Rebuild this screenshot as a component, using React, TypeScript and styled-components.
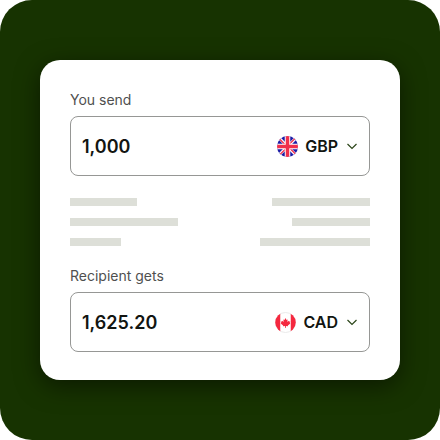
import React, { useId, useState } from "react";
import styled, { createGlobalStyle } from "styled-components";

const GlobalStyle = createGlobalStyle`
  *, *::before, *::after { box-sizing: border-box; }
  body {
    margin: 0;
    background: #ffffff;
    font-family: Inter, "Liberation Sans", sans-serif;
    color: #121511;
  }
`;

const Stage = styled.main`
  display: flex;
  align-items: center;
  justify-content: center;
  min-height: 100vh;
  padding: 40px;
  border-radius: 32px;
  background: #173301;
`;

const Card = styled.form`
  flex: 1;
  min-width: 0;
  max-width: 480px;
  padding: 30px 30px 28px;
  border-radius: 20px;
  background: #ffffff;
  box-shadow: 0 6px 24px rgba(0, 0, 0, 0.5);
`;

const FieldGroup = styled.div`
  display: flex;
  flex-direction: column;
  gap: 6px;
`;

const Label = styled.label`
  font-size: 14px;
  line-height: 20px;
  color: #4f504f;
`;

const FieldBox = styled.div`
  display: flex;
  align-items: center;
  height: 60px;
  padding: 0 11px;
  border: 1px solid #969795;
  border-radius: 8px;
`;

const AmountInput = styled.input`
  flex: 1;
  width: 100%;
  min-width: 0;
  padding: 2px 0 0;
  border: 0;
  outline: 0;
  background: transparent;
  font: 600 18px/24px Inter, "Liberation Sans", sans-serif;
  color: #121511;
`;

const CurrencyButton = styled.button`
  display: flex;
  align-items: center;
  gap: 8px;
  padding: 0;
  border: 0;
  background: transparent;
  font: 600 16px/24px Inter, "Liberation Sans", sans-serif;
  color: #121511;
  cursor: pointer;
`;

const CurrencyName = styled.span`
  display: flex;
  align-items: center;
  gap: 7px;
`;

const FlagIcon = styled.svg`
  width: 21px;
  height: 21px;
`;

const ChevronIcon = styled.svg`
  width: 12px;
  height: 12px;
`;

const Breakdown = styled.div`
  display: flex;
  flex-direction: column;
  gap: 12px;
  margin: 22px 0 20px;
`;

const BreakdownRow = styled.div`
  display: flex;
  justify-content: space-between;
`;

const Bar = styled.span<{ $width: number }>`
  width: ${({ $width }) => $width}px;
  height: 8px;
  background: #dddfd8;
`;

function BritishFlag() {
  const id = useId();
  return (
    <FlagIcon viewBox="0 0 42 42" aria-hidden="true">
      <clipPath id={id}>
        <circle cx="21" cy="21" r="21" />
      </clipPath>
      <g clipPath={`url(#${id})`}>
        <path fill="#1c1ca6" d="M0 0h42v42H0z" />
        <path stroke="#ffffff" strokeWidth="6" d="M0 0l42 42M42 0L0 42" />
        <path stroke="#f0304c" strokeWidth="2.500" d="M0 1l20 20M42 41L22 21M41 0L21 20M1 42l20-20" />
        <path stroke="#ffffff" strokeWidth="11" d="M21 0v42M0 21h42" />
        <path stroke="#f0304c" strokeWidth="7" d="M21 0v42M0 21h42" />
      </g>
    </FlagIcon>
  );
}

function CanadianFlag() {
  const id = useId();
  return (
    <FlagIcon viewBox="0 0 42 42" aria-hidden="true">
      <clipPath id={id}>
        <circle cx="21" cy="21" r="20.500" />
      </clipPath>
      <circle cx="21" cy="21" r="20" fill="#ffffff" stroke="#e3e3e3" strokeWidth="1.500" />
      <g clipPath={`url(#${id})`} fill="#f5283f">
        <path d="M0 0h10.500v42H0zM31.500 0H42v42H31.500z" />
        <path d="M21 12l2 4 2.400-1.100-1 5 2.700-2.500.7 1.800 2.700-.4-1.100 3 1.300 1-5 4 .4 1.800-4.300-.6.2 3.500h-2l.2-3.500-4.300.6.4-1.800-5-4 1.300-1-1.100-3 2.700.4.7-1.800 2.700 2.500-1-5 2.400 1.100z" />
      </g>
    </FlagIcon>
  );
}

function Chevron() {
  return (
    <ChevronIcon viewBox="0 0 12 12" fill="none" aria-hidden="true">
      <path d="M1.500 4L6 8.400 10.500 4" stroke="#2b4518" strokeWidth="1.200" />
    </ChevronIcon>
  );
}

interface MoneyFieldProps {
  label: string;
  initialAmount: string;
  currency: string;
  flag: React.ReactNode;
}

function MoneyField({ label, initialAmount, currency, flag }: MoneyFieldProps) {
  const id = useId();
  const [amount, setAmount] = useState(initialAmount);
  return (
    <FieldGroup>
      <Label htmlFor={id}>{label}</Label>
      <FieldBox>
        <AmountInput
          id={id}
          inputMode="decimal"
          value={amount}
          onChange={(event) => setAmount(event.target.value)}
        />
        <CurrencyButton type="button" aria-haspopup="listbox">
          <CurrencyName>
            {flag}
            {currency}
          </CurrencyName>
          <Chevron />
        </CurrencyButton>
      </FieldBox>
    </FieldGroup>
  );
}

const breakdownRows = [
  { left: 67, right: 98 },
  { left: 108, right: 78 },
  { left: 51, right: 110 },
];

export default function App() {
  return (
    <>
      <GlobalStyle />
      <Stage>
        <Card>
          <MoneyField label="You send" initialAmount="1,000" currency="GBP" flag={<BritishFlag />} />
          <Breakdown aria-hidden="true">
            {breakdownRows.map((row) => (
              <BreakdownRow key={row.left}>
                <Bar $width={row.left} />
                <Bar $width={row.right} />
              </BreakdownRow>
            ))}
          </Breakdown>
          <MoneyField label="Recipient gets" initialAmount="1,625.20" currency="CAD" flag={<CanadianFlag />} />
        </Card>
      </Stage>
    </>
  );
}
